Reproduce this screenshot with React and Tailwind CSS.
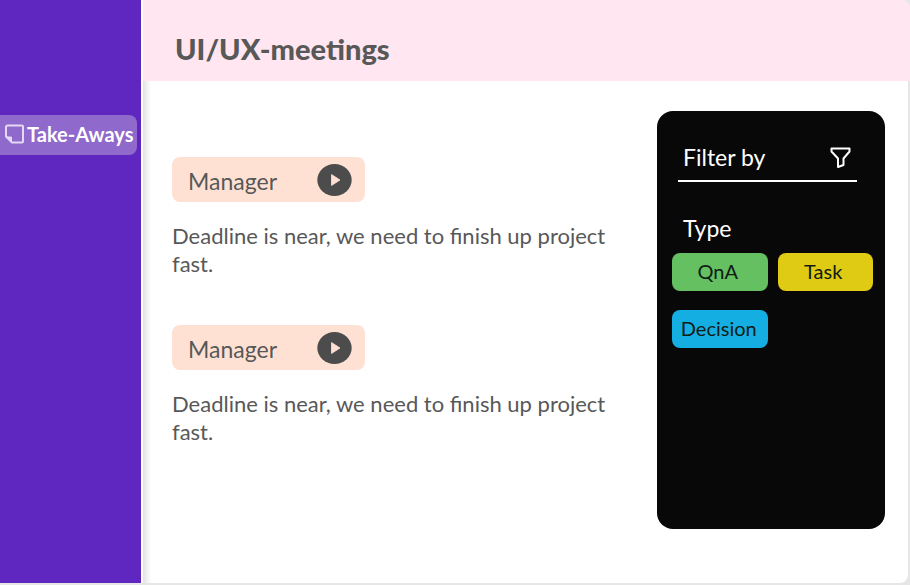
const takeAways = [
  { id: 1, author: "Manager", text: "Deadline is near, we need to finish up project fast." },
  { id: 2, author: "Manager", text: "Deadline is near, we need to finish up project fast." },
];

const filters = [
  { label: "QnA", color: "bg-[#65c062]" },
  { label: "Task", color: "bg-[#dfcb14]" },
  { label: "Decision", color: "bg-[#15aee2]" },
];

function NoteIcon() {
  return (
    <svg className="size-5 shrink-0" viewBox="0 0 20 20" fill="none" stroke="#e4d8f4" strokeWidth="2" strokeLinejoin="round" aria-hidden="true">
      <path d="M2.500 1.500h14.500a1 1 0 0 1 1 1v15a1 1 0 0 1-1 1H7L1 12.500V3A1.500 1.500 0 0 1 2.500 1.500Z" />
      <path d="M1.500 13H6.500V18.200Z" fill="#e4d8f4" strokeWidth="1" />
    </svg>
  );
}

function PlayIcon() {
  return (
    <svg className="block h-8 w-9" viewBox="0 0 36 32" aria-hidden="true">
      <ellipse cx="17.500" cy="16" rx="17.200" ry="16" fill="#4c4c4c" />
      <path d="M14.500 10.500 23 16 14.500 21.500Z" fill="#ffe1d4" stroke="#ffe1d4" strokeWidth="0.800" strokeLinejoin="round" />
    </svg>
  );
}

function FunnelIcon() {
  return (
    <svg className="block size-6" viewBox="0 0 24 24" fill="none" stroke="#fff" strokeWidth="2" strokeLinejoin="round" aria-hidden="true">
      <path d="M2.500 3.500H20.500V6.500L14.500 13.500V20L9 22V13.500L2.500 6.500Z" />
    </svg>
  );
}

function TakeAway({ author, text }) {
  return (
    <article>
      <div className="flex h-[45px] w-[193px] items-center justify-between rounded-lg bg-[#ffe1d4] pl-4 pr-3">
        <h2 className="pt-0.5">{author}</h2>
        <button type="button" aria-label="Play recording">
          <PlayIcon />
        </button>
      </div>
      <p className="mt-5 text-[22px] leading-7">{text}</p>
    </article>
  );
}

export default function App() {
  return (
    <div className="flex min-h-screen bg-[#e6e6e6] font-['Lato',sans-serif] text-[#585858]">
      <nav className="mb-0.5 w-[141px] shrink-0 bg-[#6027c0] pt-[115px]">
        <a href="#take-aways" className="mr-1 flex h-10 items-center gap-0.5 rounded-r-lg bg-[#8f69cb] pb-0.5 pl-[5px] text-[20px] font-bold leading-6 text-white">
          <NoteIcon />
          Take-Aways
        </a>
      </nav>
      <div className="mb-0.5 mr-0.5 flex min-w-0 grow flex-col rounded-r-lg border-l-2 border-white bg-white">
        <header className="-mr-0.5 h-[81px] rounded-tr-lg bg-[#ffe6f0] px-8 pt-[31px]">
          <h1 className="text-[29px] font-black leading-9">UI/UX-meetings</h1>
        </header>
        <div className="flex grow">
          <div className="w-2 shrink-0 bg-linear-to-r from-[#e2e2e2] to-white" />
          <main className="flex grow items-start justify-between gap-8 pb-8 pl-[21px] pr-[23px] pt-[30px] text-[23px] leading-7">
            <section className="flex max-w-[450px] flex-col gap-[47px] pt-[46px]">
              {takeAways.map((item) => (
                <TakeAway key={item.id} author={item.author} text={item.text} />
              ))}
            </section>
            <aside className="min-h-[418px] w-[228px] shrink-0 rounded-2xl bg-[#080808] pl-[15px] pr-3 pt-8 text-white">
              <div className="ml-1.5 mr-4 flex h-[39px] items-start justify-between border-b-2 border-white pl-[5px] pr-1">
                <h2>Filter by</h2>
                <button type="button" aria-label="Filter" className="pt-0.5">
                  <FunnelIcon />
                </button>
              </div>
              <h3 className="ml-[11px] mt-8">Type</h3>
              <div className="mt-[11px] grid grid-cols-2 gap-x-2.5 gap-y-[19px] text-[20px] text-[#101c14]">
                {filters.map((filter) => (
                  <button key={filter.label} type="button" className={`h-[38px] rounded-lg pb-0.5 pr-1 last:pr-0.5 ${filter.color}`}>
                    {filter.label}
                  </button>
                ))}
              </div>
            </aside>
          </main>
        </div>
      </div>
    </div>
  );
}
